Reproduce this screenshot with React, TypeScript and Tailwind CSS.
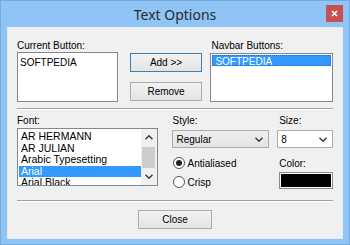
const fontList = ['AR HERMANN', 'AR JULIAN', 'Arabic Typesetting', 'Arial', 'Arial Black'];

function Chevron({ up = false }: { up?: boolean }) {
  return (
    <svg width="8" height="5" viewBox="0 0 8 5" className={up ? 'rotate-180' : ''}>
      <path d="M0.5 0.8 L4 4.2 L7.5 0.8" fill="none" stroke="#333" strokeWidth="1.4" />
    </svg>
  );
}

function Button({ label, primary = false }: { label: string; primary?: boolean }) {
  return (
    <div
      className={`h-[19px] flex items-center justify-center border bg-gradient-to-b from-[#f2f2f2] to-[#e4e4e4] text-black ${
        primary ? 'border-[#3c7fb1]' : 'border-[#acacac]'
      }`}
    >
      {label}
    </div>
  );
}

function Radio({ label, checked }: { label: string; checked?: boolean }) {
  return (
    <div className="h-[12px] flex items-center gap-[3px]">
      <div className="w-[12px] h-[12px] rounded-full border border-[#555] bg-white flex items-center justify-center">
        {checked && <div className="w-[6px] h-[6px] rounded-full bg-[#222]" />}
      </div>
      <span>{label}</span>
    </div>
  );
}

export default function App() {
  return (
    <div className="w-[350px] h-[245px] flex flex-col bg-[#8fc4f4] border border-[#74abdf] font-['Liberation_Sans',Arial,sans-serif] text-[10px] text-black">
      {/* title bar */}
      <div className="h-[26px] grid grid-cols-[1fr_auto_1fr] items-center">
        <div />
        <div className="font-['Noto_Sans',sans-serif] text-[14px] text-[#2b2b2b] leading-none pt-[1px]">Text Options</div>
        <div className="flex justify-end pr-[6px] self-start pt-[4px]">
          <div className="w-[17px] h-[17px] bg-[#c75050] flex items-center justify-center">
            <svg width="7" height="7" viewBox="0 0 7 7">
              <path d="M1 1 L6 6 M6 1 L1 6" stroke="#fff" strokeWidth="1.6" />
            </svg>
          </div>
        </div>
      </div>

      {/* client area */}
      <div className="flex-1 mx-[6px] mb-[5px] bg-[#f0f0f0] border border-[#e4ecf4] px-[9px] pt-[11px] flex flex-col">
        <div className="flex items-start">
          <div className="w-[101px]">
            <div className="h-[13px] leading-[13px]">Current Button:</div>
            <div className="h-[50px] border border-[#828790] bg-white px-[2px] pt-[4px] leading-[11px]">SOFTPEDIA</div>
          </div>
          <div className="w-[73px] ml-[12px] pt-[14px] flex flex-col gap-[10px]">
            <Button label="Add >>" primary />
            <Button label="Remove" />
          </div>
          <div className="w-[123px] ml-[8px]">
            <div className="h-[13px] leading-[13px] pl-[1px]">Navbar Buttons:</div>
            <div className="mt-[1px] h-[49px] border border-[#828790] bg-white p-px">
              <div className="h-[11px] leading-[11px] bg-[#3399ff] text-white px-[2px] border border-dotted border-[#1b6fd0]">SOFTPEDIA</div>
            </div>
          </div>
        </div>

        <div className="mt-[6px] border-t border-[#a0a0a0] border-b border-b-white" />

        <div className="flex items-start">
          <div className="w-[141px]">
            <div className="mt-[4px] h-[13px] leading-[13px]">Font:</div>
            <div className="mt-[1px] h-[58px] border border-[#828790] bg-white flex overflow-hidden">
              <div className="flex-1 pt-[2px] pl-px">
                {fontList.map((f) => (
                  <div
                    key={f}
                    className={`h-[11.5px] leading-[11.5px] px-[2px] text-[10.5px] ${f === 'Arial' ? 'bg-[#3399ff] text-white' : ''}`}
                  >
                    {f}
                  </div>
                ))}
              </div>
              <div className="w-[16px] bg-[#f0f0f0] flex flex-col items-center">
                <div className="h-[16px] flex items-center justify-center">
                  <Chevron up />
                </div>
                <div className="mt-[2px] w-[13px] h-[21px] bg-[#cdcdcd]" />
                <div className="flex-1 flex items-center justify-center">
                  <Chevron />
                </div>
              </div>
            </div>
          </div>

          <div className="w-[98px] ml-[14px]">
            <div className="mt-[4px] h-[13px] leading-[13px] pl-px">Style:</div>
            <div className="mt-[3px] h-[18px] border border-[#acacac] bg-gradient-to-b from-[#efefef] to-[#e3e3e3] flex items-center justify-between pl-[4px] pr-[5px]">
              <span>Regular</span>
              <Chevron />
            </div>
            <div className="mt-[9px] flex flex-col gap-[7px] pl-px">
              <Radio label="Antialiased" checked />
              <Radio label="Crisp" />
            </div>
          </div>

          <div className="w-[56px] ml-[8px]">
            <div className="mt-[4px] h-[13px] leading-[13px] pl-[2px]">Size:</div>
            <div className="mt-[3px] h-[18px] border border-[#abadb3] bg-white flex items-center justify-between pl-[3px] pr-[5px]">
              <span>8</span>
              <Chevron />
            </div>
            <div className="mt-[9px] h-[13px] leading-[13px] pl-[2px]">Color:</div>
            <div className="mt-[2px] ml-[2px] h-[17px] border border-[#8a8a8a] bg-white p-px">
              <div className="w-full h-full bg-black" />
            </div>
          </div>
        </div>

        <div className="mt-[11px] border-t border-[#a0a0a0] border-b border-b-white" />

        <div className="flex justify-center pt-[8px]">
          <div className="w-[74px]">
            <Button label="Close" />
          </div>
        </div>
      </div>
    </div>
  );
}
